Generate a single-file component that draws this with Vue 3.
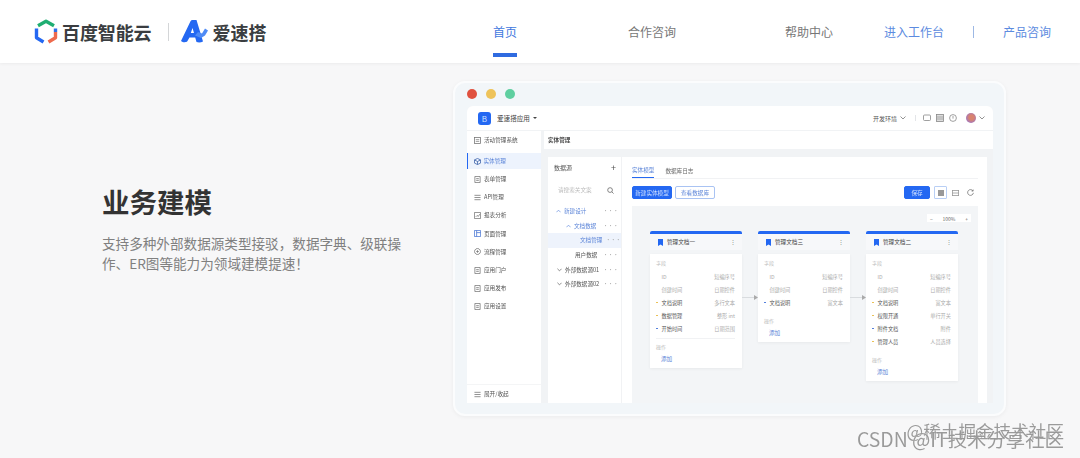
<template>
  <div class="page">
    <header class="top">
      <div class="brand">
        <svg class="hex" width="24" height="26" viewBox="0 0 24 26">
          <path d="M4 6.8 12 2.2 20 6.8" fill="none" stroke="#1fae72" stroke-width="3.4" stroke-linejoin="round" />
          <path d="M2.5 9.5V18.8L9.5 23" fill="none" stroke="#2468f2" stroke-width="3.4" stroke-linejoin="round" />
          <path d="M21.5 9.5V13" fill="none" stroke="#2f6fe8" stroke-width="3.4" />
          <path d="M21.5 13V18.8L14.5 23" fill="none" stroke="#ee6a4d" stroke-width="3.4" stroke-linejoin="round" />
        </svg>
        <span class="brand-name first">百度智能云</span>
        <i class="brand-line"></i>
        <svg class="alogo" width="27" height="23" viewBox="0 0 27 23">
          <path fill-rule="evenodd" d="M0 21 9.5 1.2C9.9.4 10.6 0 11.5 0H15.5L22 21.5C20 22.6 17.5 22.8 15.5 22L14.2 17.5H8.5L6 21.8C4 22.6 1.5 22.4 0 21ZM11.5 8 9.8 13H13Z" fill="#2468f2" />
          <path d="M14 15.5 17 12 21 13.5 24 8.5 27 10.5 24 15.5 20 18Z" fill="#4f8bf5" />
        </svg>
        <span class="brand-name">爱速搭</span>
      </div>
      <nav class="nav">
        <a class="nav-item on">首页</a>
        <a class="nav-item second">合作咨询</a>
        <a class="nav-item third">帮助中心</a>
        <a class="nav-link work">进入工作台</a>
        <i class="nav-sep"></i>
        <a class="nav-link">产品咨询</a>
      </nav>
    </header>

    <main class="hero">
      <section class="intro">
        <h1>业务建模</h1>
        <p>支持多种外部数据源类型接驳，数据字典、级联操作、ER图等能力为领域建模提速！</p>
      </section>

      <div class="win">
        <div class="lights">
          <i class="red"></i><i class="yellow"></i><i class="green"></i>
        </div>
        <div class="app">
          <div class="appbar">
            <span class="app-logo">B</span>
            <span class="app-name">爱速搭应用</span>
            <span class="caret"></span>
            <span class="env">开发环境</span>
            <svg class="chev" width="6" height="4" viewBox="0 0 6 4"><path d="M.5.5 3 3 5.5.5" fill="none" stroke="#777" stroke-width=".8" /></svg>
            <i class="bar-line"></i>
            <svg class="top-ico" width="8" height="8" viewBox="0 0 8 8"><rect x=".5" y="1" width="7" height="5.5" rx="1" fill="none" stroke="#888" stroke-width=".8" /></svg>
            <svg class="top-ico" width="8" height="8" viewBox="0 0 8 8"><rect x=".5" y=".5" width="7" height="7" fill="#ddd" stroke="#888" stroke-width=".8" /><path d="M1 3H7M1 5H7" stroke="#888" stroke-width=".6" /></svg>
            <svg class="top-ico" width="8" height="8" viewBox="0 0 8 8"><circle cx="4" cy="4" r="3.4" fill="none" stroke="#888" stroke-width=".8" /><path d="M4 2V4.6" stroke="#888" stroke-width=".8" /></svg>
            <span class="avatar"></span>
            <svg class="chev" width="6" height="4" viewBox="0 0 6 4"><path d="M.5.5 3 3 5.5.5" fill="none" stroke="#777" stroke-width=".8" /></svg>
          </div>

          <div class="app-body">
            <aside class="side">
              <div class="side-title">
                <svg width="7" height="7" viewBox="0 0 8 8"><rect x=".5" y=".5" width="7" height="7" fill="none" stroke="#777" stroke-width=".9" /><path d="M2 3H6M2 5H6" stroke="#777" stroke-width=".8" /></svg>
                活动管理系统
              </div>
              <div v-for="m in menu" :key="m.label" class="side-row" :class="{ active: m.active }">
                <svg width="7" height="7" viewBox="0 0 8 8">
                  <path :d="m.icon" fill="none" :stroke="m.color || '#777'" stroke-width=".9" />
                </svg>
                {{ m.label }}
              </div>
              <div class="side-foot">
                <svg width="7" height="7" viewBox="0 0 8 8"><path d="M.5 1.5H7.5M.5 4H7.5M.5 6.5H7.5" fill="none" stroke="#777" stroke-width=".9" /></svg>
                展开/收起
              </div>
            </aside>

            <div class="right">
              <div class="crumb">实体管理</div>
              <div class="panel-wrap">
                <div class="panel">
                  <div class="tree">
                    <div class="tree-head"><span>数据源</span><b>+</b></div>
                    <div class="tree-search">
                      <span>请搜索关文案</span>
                      <svg width="7" height="7" viewBox="0 0 8 8"><circle cx="3.5" cy="3.5" r="2.7" fill="none" stroke="#666" stroke-width=".9" /><path d="M5.5 5.5 7.5 7.5" stroke="#666" stroke-width=".9" /></svg>
                    </div>
                    <div
                      v-for="t in tree"
                      :key="t.label"
                      class="tree-row"
                      :class="{ blue: t.blue, sel: t.sel }"
                      :style="{ paddingLeft: t.indent + 'px' }"
                    >
                      <svg v-if="t.arrow" class="tree-arrow" width="5" height="4" viewBox="0 0 6 4">
                        <path :d="t.arrow === 'up' ? 'M.5 3.5 3 1 5.5 3.5' : 'M.5.5 3 3 5.5.5'" fill="none" :stroke="t.blue ? '#6b92e0' : '#666'" stroke-width=".9" />
                      </svg>
                      <span>{{ t.label }}</span>
                      <em>···</em>
                    </div>
                  </div>

                  <div class="main">
                    <div class="tabs">
                      <span class="tab on">实体模型</span>
                      <span class="tab">数据库日志</span>
                    </div>
                    <div class="tools">
                      <span class="btn solid">新建实体模型</span>
                      <span class="btn ghost">查看数据库</span>
                      <span class="btn solid save">保存</span>
                      <span class="view on"><svg width="6" height="6" viewBox="0 0 6 6"><rect width="6" height="6" fill="#999" /></svg></span>
                      <span class="view"><svg width="7" height="6" viewBox="0 0 7 6"><rect x=".4" y=".4" width="6.2" height="5.2" fill="none" stroke="#999" stroke-width=".8" /><path d="M.4 3H6.6" stroke="#999" stroke-width=".8" /></svg></span>
                      <svg class="reload" width="7" height="7" viewBox="0 0 8 8"><path d="M6.8 2.2A3.3 3.3 0 1 0 7.3 4.4M7 .6V2.4H5.3" fill="none" stroke="#777" stroke-width=".9" /></svg>
                    </div>
                    <div class="canvas">
                      <div class="zoom-row">
                        <div class="zoom"><span>−</span><span>100%</span><span>+</span></div>
                      </div>
                      <div class="cards">
                        <template v-for="(c, i) in cards" :key="c.title">
                          <div v-if="i" class="link"><i></i><svg width="4" height="5" viewBox="0 0 4 5"><path d="M0 0 4 2.5 0 5Z" fill="#aaa" /></svg></div>
                          <div class="card">
                            <div class="card-head">
                              <svg width="5" height="7" viewBox="0 0 5 7"><path d="M0 0H5V7L2.5 5.6 0 7Z" fill="#2468f2" /></svg>
                              <span>{{ c.title }}</span>
                              <em>⋮</em>
                            </div>
                            <div class="card-body">
                              <div class="label">字段</div>
                              <div v-for="r in c.rows" :key="r[0]" class="field" :class="{ key: r[2] }">
                                <span class="dot" :style="{ background: r[2] || 'transparent' }"></span>
                                <span class="fname">{{ r[0] }}</span>
                                <span class="ftype">{{ r[1] }}</span>
                              </div>
                              <div class="rule" :class="{ hidden: c.noRule }"></div>
                              <div class="label">操作</div>
                              <div class="add">添加</div>
                            </div>
                          </div>
                        </template>
                      </div>
                    </div>
                  </div>
                </div>
              </div>
            </div>
          </div>
        </div>
      </div>
    </main>

    <div class="mark mark-a">@稀土掘金技术社区</div>
    <div class="mark mark-b">CSDN @IT技术分享社区</div>
  </div>
</template>

<script setup>
const box = "M1 .5H7V7.5H1ZM2.5 3H5.5M2.5 5H5.5";
const menu = [
  { label: "实体管理", active: true, color: "#3a5fa8", icon: "M4 .5 7.5 2.2V5.8L4 7.5.5 5.8V2.2ZM.5 2.2 4 4 7.5 2.2M4 4V7.5" },
  { label: "表单管理", icon: box },
  { label: "API管理", icon: "M.5 1.5H7.5M.5 4H7.5M.5 6.5H7.5" },
  { label: "报表分析", icon: "M.5 .5H7.5V7.5H.5ZM2 5.5 3.5 4 5 5 6.5 2.5" },
  { label: "页面管理", color: "#4a76d4", icon: "M.5 .5H7.5V7.5H.5ZM3 .5V7.5M3 3H7.5" },
  { label: "流程管理", icon: "M4 .6A3.4 3.4 0 1 0 4.01 .6ZM4 2.5V5.5M2.5 4H5.5" },
  { label: "应用门户", icon: box },
  { label: "应用发布", icon: box },
  { label: "应用设置", icon: box },
];

const tree = [
  { label: "新建设计", indent: 8, arrow: "up", blue: true },
  { label: "文档数据", indent: 18, arrow: "up", blue: true },
  { label: "文档管理", indent: 32, blue: true, sel: true },
  { label: "用户数据", indent: 27 },
  { label: "外部数据源01", indent: 9, arrow: "down" },
  { label: "外部数据源02", indent: 9, arrow: "down" },
];

const y = "#e7b93f";
const b = "#3d6fd8";
const base = [
  ["ID", "短编序号"],
  ["创建时间", "日期控件"],
];
const cards = [
  {
    title: "管理文档一",
    rows: [...base, ["文档说明", "多行文本", y], ["数据管理", "整形 int", y], ["开始时间", "日期范围", b]],
  },
  {
    title: "管理文档三",
    noRule: true,
    rows: [...base, ["文档说明", "富文本", b]],
  },
  {
    title: "管理文档二",
    noRule: true,
    rows: [...base, ["文档说明", "富文本", y], ["权限开通", "单行开关", y], ["附件文档", "附件", b], ["管理人员", "人员选择", y]],
  },
];
</script>

<style scoped>
.page {
  position: relative;
  width: 1080px;
  height: 458px;
  overflow: hidden;
  background: #f7f7f8;
  font-family: "Noto Sans CJK SC", "Liberation Sans", sans-serif;
}

.top {
  height: 63px;
  display: flex;
  align-items: center;
  background: #fff;
  box-shadow: 0 1px 3px rgba(0, 0, 0, 0.05);
}

.brand {
  display: flex;
  align-items: center;
  padding-left: 34px;
  width: 493px;
  box-sizing: border-box;
}

.brand-name {
  font-size: 18px;
  font-weight: 700;
  color: #3a3d40;
  margin-left: 5px;
  white-space: nowrap;
}

.brand-name.first {
  letter-spacing: -0.1px;
  margin-left: 4px;
}

.brand-line {
  width: 1px;
  height: 18px;
  background: #d4d6d8;
  margin: 0 12px 0 16px;
}

.nav {
  display: flex;
  align-items: center;
  height: 63px;
  font-size: 12px;
}

.nav-item {
  position: relative;
  color: #777;
  line-height: 63px;
}

.nav-item.on {
  color: #3f78de;
}

.nav-item.on::after {
  content: "";
  position: absolute;
  left: 0;
  right: 0;
  bottom: 6px;
  height: 4px;
  background: #2f6be0;
}

.nav-item.second {
  margin-left: 111px;
}

.nav-item.third {
  margin-left: 109px;
}

.nav-link {
  color: #5c8be0;
}

.nav-link.work {
  margin-left: 51px;
}

.nav-sep {
  width: 1px;
  height: 12px;
  background: #9db8e4;
  margin: 0 29px 0 29px;
}

.hero {
  display: flex;
  padding: 18px 0 0 102px;
}

.intro {
  width: 351px;
  padding-top: 100px;
}

.intro h1 {
  margin: 0;
  font-size: 27.5px;
  line-height: 40px;
  font-weight: 700;
  color: #333;
}

.intro p {
  width: 305px;
  margin: 12px 0 0;
  font-size: 13.6px;
  line-height: 20px;
  color: #808080;
}

.win {
  width: 553px;
  height: 335px;
  box-sizing: border-box;
  border: 2px solid #fbfcfd;
  border-radius: 12px;
  background: #f2f6f9;
  box-shadow: 0 1px 4px rgba(0, 0, 0, 0.05);
  padding: 0 11px 0 12px;
  filter: blur(0.3px);
}

.lights {
  display: flex;
  gap: 9px;
  height: 16px;
  margin-bottom: 7px;
  align-items: flex-end;
}

.lights i {
  width: 10px;
  height: 10px;
  border-radius: 50%;
}

.red { background: #e0513f; }
.yellow { background: #eec35a; }
.green { background: #5fcfa0; }

.app {
  height: 297px;
  background: #f1f3f5;
  border-radius: 6px 6px 0 0;
  display: flex;
  flex-direction: column;
  font-size: 5.6px;
  color: #555;
}

.appbar {
  flex: none;
  height: 24px;
  display: flex;
  align-items: center;
  padding: 0 8px 0 11px;
  background: #fff;
  border-radius: 6px 6px 0 0;
}

.app-logo {
  width: 13px;
  height: 13px;
  border-radius: 3px;
  background: #2468f2;
  color: #cfe0ff;
  font-size: 8px;
  line-height: 13px;
  text-align: center;
}

.app-name {
  margin-left: 6px;
  font-size: 6.6px;
  color: #444;
}

.caret {
  width: 0;
  height: 0;
  margin-left: 3px;
  border: 2px solid transparent;
  border-top: 2.4px solid #444;
  border-bottom: 0;
}

.env {
  margin-left: auto;
  font-size: 6px;
  color: #555;
}

.chev {
  margin-left: 3px;
}

.bar-line {
  width: 1px;
  height: 6px;
  background: #e3e5e8;
  margin: 0 7px 0 9px;
}

.top-ico {
  margin-right: 5px;
}

.avatar {
  width: 10px;
  height: 10px;
  border-radius: 50%;
  background: radial-gradient(circle at 55% 45%, #d9836e 0 30%, #a678b8 70%);
  margin-left: 4px;
}

.app-body {
  flex: 1;
  min-height: 0;
  display: flex;
  padding-top: 1px;
}

.side {
  width: 74px;
  flex: none;
  display: flex;
  flex-direction: column;
  background: #fff;
}

.side-title {
  height: 18px;
  display: flex;
  align-items: center;
  gap: 3px;
  padding-left: 7px;
  margin-bottom: 3px;
}

.side-row {
  height: 18.2px;
  display: flex;
  align-items: center;
  gap: 3px;
  padding-left: 7px;
  box-sizing: border-box;
}

.side-row.active {
  height: 16px;
  margin: 1px 0;
  background: #edf3fd;
  border-left: 1.5px solid #2468f2;
  padding-left: 5.5px;
  color: #5c85d8;
}

.side-foot {
  margin-top: auto;
  height: 18px;
  display: flex;
  align-items: center;
  gap: 3px;
  padding-left: 7px;
  border-top: 1px solid #f4f5f6;
}

.right {
  flex: 1;
  min-width: 0;
  display: flex;
  flex-direction: column;
  padding-left: 3px;
}

.crumb {
  flex: none;
  height: 18px;
  line-height: 18px;
  padding-left: 4px;
  background: #fff;
  font-weight: 700;
  color: #444;
}

.panel-wrap {
  flex: 1;
  min-height: 0;
  padding: 8px 6px 0 4px;
}

.panel {
  height: 100%;
  display: flex;
  background: #fff;
}

.tree {
  width: 74px;
  flex: none;
  border-right: 1px solid #f1f2f4;
  box-sizing: border-box;
}

.tree-head {
  height: 21px;
  display: flex;
  align-items: center;
  justify-content: space-between;
  padding: 0 5px 0 6px;
  font-size: 6px;
}

.tree-head b {
  font-size: 9px;
  font-weight: 400;
}

.tree-search {
  height: 24px;
  display: flex;
  align-items: center;
  justify-content: space-between;
  padding: 0 7px 0 10px;
  color: #bbb;
  margin-bottom: 2px;
}

.tree-search svg {
  flex: none;
}

.tree-row {
  height: 14.6px;
  display: flex;
  align-items: center;
  gap: 3px;
  box-sizing: border-box;
  white-space: nowrap;
}

.tree-row.blue {
  color: #5c85d8;
}

.tree-row.sel {
  background: #eef3fc;
}

.tree-row em {
  margin-left: auto;
  padding-right: 3px;
  font-style: normal;
  color: #aaa;
  letter-spacing: -0.5px;
}

.main {
  flex: 1;
  min-width: 0;
  display: flex;
  flex-direction: column;
  padding: 0 9px 0 10px;
}

.tabs {
  height: 22px;
  flex: none;
  display: flex;
  gap: 11px;
  align-items: flex-end;
  border-bottom: 1px solid #f1f2f4;
  box-sizing: border-box;
}

.tab {
  height: 13px;
  line-height: 12px;
  color: #666;
}

.tab.on {
  color: #5c85d8;
  border-bottom: 1px solid #2468f2;
}

.tools {
  height: 27px;
  flex: none;
  display: flex;
  align-items: center;
  gap: 3px;
}

.btn {
  height: 13px;
  width: 40px;
  line-height: 12px;
  box-sizing: border-box;
  border-radius: 2px;
  text-align: center;
  border: 1px solid #2468f2;
}

.btn.solid {
  background: #2468f2;
  color: #cfe0ff;
}

.btn.ghost {
  border-color: #a9c3f3;
  color: #5c85d8;
}

.btn.save {
  width: 26px;
  margin-left: auto;
  margin-right: 1px;
}

.view {
  width: 10px;
  height: 13px;
  box-sizing: border-box;
  display: flex;
  align-items: center;
  justify-content: center;
}

.view.on {
  width: 13px;
  border: 1px solid #b9cff5;
  border-radius: 1px;
}

.reload {
  margin: 0 4px 0 4px;
}

.canvas {
  flex: 1;
  min-height: 0;
  background: #f3f5f7;
  padding: 0 19px 0 18px;
  display: flex;
  flex-direction: column;
}

.zoom-row {
  height: 25px;
  flex: none;
  display: flex;
  justify-content: flex-end;
  align-items: flex-start;
  margin-right: -12px;
}

.zoom {
  margin-top: 8px;
  width: 44px;
  height: 8px;
  background: #fff;
  display: flex;
  justify-content: space-between;
  align-items: center;
  padding: 0 3px;
  box-sizing: border-box;
  font-size: 5px;
  color: #666;
}

.cards {
  display: flex;
  align-items: flex-start;
}

.link {
  width: 16px;
  flex: none;
  display: flex;
  align-items: center;
  margin-top: 64px;
}

.link i {
  flex: 1;
  height: 1px;
  background: #d9dcdf;
}

.card {
  width: 92px;
  flex: none;
}

.card-head {
  height: 19px;
  border-top: 3px solid #2468f2;
  border-radius: 2px 2px 0 0;
  background: #f7f8fa;
  display: flex;
  align-items: center;
  padding: 0 6px 0 8px;
  gap: 4px;
  font-size: 5.6px;
  color: #444;
  box-sizing: border-box;
}

.card-head em {
  margin-left: auto;
  font-style: normal;
  color: #888;
}

.card-body {
  margin-top: 4px;
  background: #fff;
  padding: 3px 7px 4px 6px;
  box-shadow: 0 1px 3px rgba(0, 0, 0, 0.05);
}

.label {
  height: 13px;
  line-height: 11px;
  font-size: 5px;
  color: #bbb;
}

.field {
  height: 13px;
  display: flex;
  align-items: center;
  font-size: 5.2px;
  color: #aaa;
}

.field.key .fname {
  color: #555;
}

.dot {
  width: 1.5px;
  height: 1.5px;
  border-radius: 50%;
  margin-right: 3px;
}

.fname {
  margin-left: 1px;
}

.ftype {
  margin-left: auto;
}

.rule {
  height: 1px;
  margin: 3px 0 2px;
  background: #f1f2f4;
}

.rule.hidden {
  background: transparent;
}

.add {
  height: 10px;
  line-height: 10px;
  padding-left: 5px;
  color: #5c85d8;
}

.mark {
  position: absolute;
  right: 16px;
  white-space: nowrap;
  color: rgba(120, 120, 120, 0.75);
  text-shadow: 0 0 1px #fff;
}

.mark-a {
  top: 419px;
  font-size: 17.6px;
  line-height: 24px;
}

.mark-b {
  top: 426px;
  font-size: 19.4px;
  line-height: 26px;
}
</style>
